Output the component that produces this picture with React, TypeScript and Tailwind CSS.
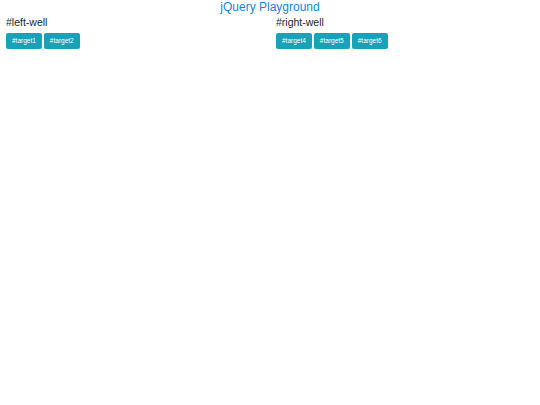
export default function App() {
  const left = ['#target1', '#target2'];
  const right = ['#target4', '#target5', '#target6'];

  return (
    <div className="min-h-screen bg-white font-['Liberation_Sans',Arial,sans-serif] text-[#212529]">
      <h3 className="text-center text-[12px] leading-[14px] text-[#1784d8]">jQuery Playground</h3>
      <div className="grid grid-cols-2 px-[6px]">
        <div>
          <h4 className="text-[10.5px] leading-[12px] mt-[2px]">#left-well</h4>
          <div className="flex gap-[2px] mt-[5px]">
            {left.map((t) => (
              <button key={t} className="h-[16px] px-[6px] rounded-[2px] bg-[#17a2b8] text-white text-[6.5px] leading-none">
                {t}
              </button>
            ))}
          </div>
        </div>
        <div className="pl-[6px]">
          <h4 className="text-[10.5px] leading-[12px] mt-[2px]">#right-well</h4>
          <div className="flex gap-[2px] mt-[5px]">
            {right.map((t) => (
              <button key={t} className="h-[16px] px-[6px] rounded-[2px] bg-[#17a2b8] text-white text-[6.5px] leading-none">
                {t}
              </button>
            ))}
          </div>
        </div>
      </div>
    </div>
  );
}
